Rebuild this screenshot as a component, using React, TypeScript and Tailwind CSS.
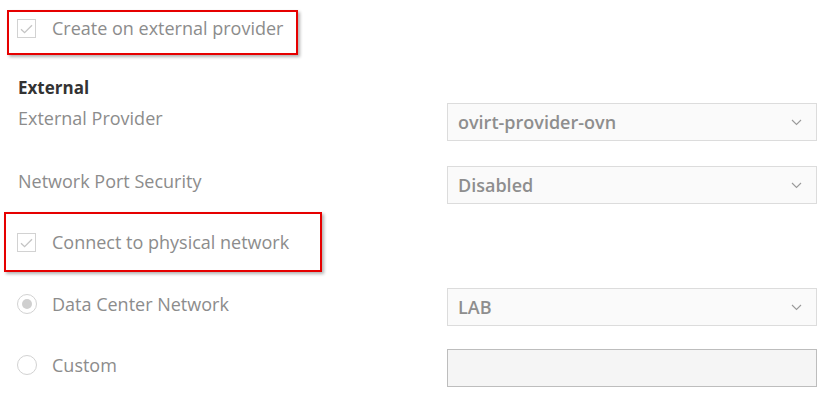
import React from 'react';

const Check: React.FC = () => (
  <span className="flex h-[19px] w-[19px] shrink-0 items-center justify-center border border-[#d2d2d2] bg-white">
    <svg width="13" height="10" viewBox="0 0 13 10" fill="none">
      <path d="M1 5.2 L4.6 8.6 L12 1.2" stroke="#c4c4c4" strokeWidth="1.3" />
    </svg>
  </span>
);

const Radio: React.FC<{ checked?: boolean }> = ({ checked }) => (
  <span className="flex h-[20px] w-[20px] shrink-0 items-center justify-center rounded-full border border-[#d2d2d2] bg-white">
    {checked && <span className="h-[10px] w-[10px] rounded-full bg-[#cfcfcf]" />}
  </span>
);

const Select: React.FC<{ value: string }> = ({ value }) => (
  <div className="flex h-[38px] w-[370px] items-center justify-between border border-[#dcdcdc] bg-[#fafafa] pl-[10px] pr-[14px]">
    <span className="font-semibold text-[#8e8e8e]">{value}</span>
    <svg width="11" height="7" viewBox="0 0 11 7" fill="none">
      <path d="M1 1 L5.5 5.5 L10 1" stroke="#9a9a9a" strokeWidth="1.1" />
    </svg>
  </div>
);

const App: React.FC = () => {
  return (
    <div className="h-[413px] w-[839px] overflow-hidden bg-white pt-[10px] font-['Open_Sans',sans-serif] text-[18px] leading-[24px] text-[#8c8c8c]">
      <div className="ml-[7px] flex h-[45px] w-[291px] items-start gap-[16px] border-2 border-[#e60000] pl-[8px] pt-[7px] shadow-[2px_2px_3px_rgba(0,0,0,0.3)]">
        <Check />
        <span className="-mt-[3px]">Create on external provider</span>
      </div>

      <div className="pl-[18px]">
        <h3 className="mt-[21px] text-[17px] font-bold text-[#333]">External</h3>

        <div className="mt-[3px] flex">
          <span className="w-[429px] pt-[3px]">External Provider</span>
          <Select value="ovirt-provider-ovn" />
        </div>

        <div className="mt-[25px] flex">
          <span className="w-[429px] pt-[3px]">Network Port Security</span>
          <Select value="Disabled" />
        </div>
      </div>

      <div className="ml-[4px] mt-[8px] flex h-[60px] w-[318px] items-start gap-[16px] border-2 border-[#e60000] pl-[11px] pt-[19px] shadow-[2px_2px_3px_rgba(0,0,0,0.3)]">
        <Check />
        <span className="-mt-[3px]">Connect to physical network</span>
      </div>

      <div className="pl-[17px]">
        <div className="mt-[16px] flex">
          <div className="flex w-[430px] items-center gap-[15px] pt-[4px] self-start">
            <Radio checked />
            <span>Data Center Network</span>
          </div>
          <Select value="LAB" />
        </div>

        <div className="mt-[23px] flex">
          <div className="flex w-[430px] items-center gap-[15px] pt-[4px] self-start">
            <Radio />
            <span>Custom</span>
          </div>
          <div className="h-[38px] w-[370px] border border-[#bdbdbd] bg-[#f5f5f5]" />
        </div>
      </div>
    </div>
  );
};

export default App;
